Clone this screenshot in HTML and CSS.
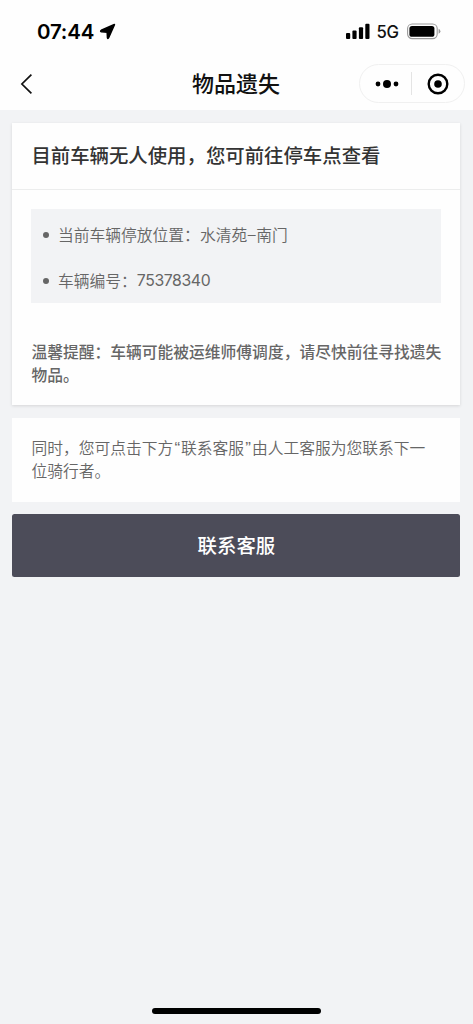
FILE: index.html
```html
<!DOCTYPE html>
<html lang="zh-CN">
<head>
<meta charset="utf-8">
<meta name="viewport" content="width=device-width, initial-scale=1">
<title>物品遗失</title>
<link rel="stylesheet" href="styles.css">
</head>
<body>
<div class="screen">
  <header class="top">
    <div class="status">
      <div class="status-left">
        <span class="clock">07:44</span>
        <svg class="locate" width="17" height="17" viewBox="0 0 17 17"><path d="M15.4 1.6 L9.6 14.7 Q8.9 16 8.5 14.7 L8.2 9.2 L2.4 8.7 Q1 8.2 2.3 7.3 Z" fill="#000" stroke="#000" stroke-width="1.6" stroke-linejoin="round"/></svg>
      </div>
      <div class="status-right">
        <svg class="signal" width="24" height="16" viewBox="0 0 24 16"><rect x="0" y="9.9" width="4.2" height="6" rx="1"/><rect x="6.4" y="7.4" width="4.2" height="8.5" rx="1"/><rect x="12.9" y="4.2" width="4.2" height="11.7" rx="1"/><rect x="19.3" y=".8" width="4.2" height="15.1" rx="1"/></svg>
        <span class="network">5G</span>
        <svg class="battery" width="34" height="17" viewBox="0 0 34 17"><rect x=".6" y="1" width="29.6" height="14.6" rx="4.6" fill="none" stroke="#999" stroke-width="1.1"/><rect x="2.4" y="2.9" width="25" height="10.9" rx="2.6"/><path d="M31.6 5.8 Q33.4 6.7 33.4 8.3 Q33.4 9.9 31.6 10.8 Z" fill="#999"/></svg>
      </div>
    </div>
    <nav class="nav">
      <svg class="back" width="13" height="22" viewBox="0 0 13 22"><path d="M11.4 1.6 L1.9 11 L11.4 20.4" fill="none" stroke="#111" stroke-width="1.7"/></svg>
      <h1 class="title">物品遗失</h1>
      <div class="capsule">
        <svg class="more" width="24" height="10" viewBox="0 0 24 10"><circle cx="3" cy="5" r="2.4"/><circle cx="12" cy="5" r="4"/><circle cx="21" cy="5" r="2.4"/></svg>
        <span class="split"></span>
        <svg class="close" width="22" height="22" viewBox="0 0 22 22"><circle cx="11" cy="11" r="9.3" fill="none" stroke="#000" stroke-width="2.4"/><circle cx="11" cy="11" r="3.8"/></svg>
      </div>
    </nav>
  </header>
  <main class="content">
    <section class="card raised">
      <h2 class="card-title">目前车辆无人使用，您可前往停车点查看</h2>
      <div class="card-body">
        <ul class="details">
          <li>当前车辆停放位置：水清苑<span class="dash">–</span>南门</li>
          <li>车辆编号：<span class="number">75378340</span></li>
        </ul>
        <p class="tip">温馨提醒：车辆可能被运维师傅调度，请尽快前往寻找遗失<br>物品。</p>
      </div>
    </section>
    <section class="card note">同时，您可点击下方<span class="quote">“</span>联系客服<span class="quote">”</span>由人工客服为您联系下一<br>位骑行者。</section>
    <button class="contact" type="button">联系客服</button>
  </main>
  <div class="home-bar"></div>
</div>
</body>
</html>
```

FILE: styles.css
```css
* { box-sizing: border-box; }

body {
  margin: 0;
  background: #f2f3f5;
  color: #666;
  font-family: "Noto Sans CJK SC", sans-serif;
}

.screen {
  display: flex;
  flex-direction: column;
  width: 473px;
  height: 1024px;
  overflow: hidden;
}

svg { display: block; flex: none; }

.top { height: 110px; background: #fefefe; }

.status {
  display: flex;
  justify-content: space-between;
  height: 57px;
  padding: 23px 32px 0 37px;
}

.status-left,
.status-right { display: flex; align-items: flex-start; }

.clock {
  width: 62px;
  color: #000;
  font: 600 20.5px/18px Inter, sans-serif;
  letter-spacing: -0.2px;
  white-space: nowrap;
}

.network {
  width: 23px;
  margin: 0 7.5px 0 7px;
  color: #111;
  font: 450 16.7px/19px Inter, sans-serif;
  letter-spacing: -0.2px;
}

.nav {
  display: grid;
  grid-template-columns: 106px 1fr 106px;
  align-items: center;
  height: 53px;
  padding: 0 8px 0 8px;
}

.back { margin-left: 12px; }

.title {
  margin: 0;
  padding: 0 1px 4px 0;
  color: #111;
  font-size: 22px;
  font-weight: 500;
  line-height: 32px;
  text-align: center;
}

.capsule {
  display: flex;
  align-items: center;
  width: 106px;
  height: 39px;
  padding-left: 15px;
  border: 1px solid #f0f0f0;
  border-radius: 20px;
}

.split { width: 1px; height: 23px; margin: 0 15px 0 12px; background: #e4e4e4; }

.content {
  display: flex;
  flex: 1;
  flex-direction: column;
  padding: 13px 12.6px 0 12.4px;
}

.card { background: #fefefe; }

.raised { height: 282px; box-shadow: 0 1px 3px rgba(0, 0, 0, .12); }

.card-title {
  height: 66.5px;
  margin: 0;
  padding: 17px 19px 0;
  border-bottom: 1.5px solid #eceded;
  color: #333;
  font-size: 19.4px;
  font-weight: 500;
  line-height: 29px;
  white-space: nowrap;
}

.card-body { padding: 19.5px 19px 0; }

.details {
  display: grid;
  grid-template-rows: 46px 46px;
  height: 94px;
  margin: 0;
  padding: 3px 0 0 12px;
  background: #f2f3f5;
  font-size: 15.77px;
  font-weight: 350;
  line-height: 46px;
  list-style: none;
}

.details li { display: flex; align-items: center; white-space: nowrap; }

.details li::before {
  width: 6px;
  height: 6px;
  margin-right: 8.6px;
  border-radius: 50%;
  background: #666;
  content: "";
}

.dash { width: 9px; font-family: Inter, sans-serif; text-align: center; }

.number {
  font-family: Inter, sans-serif;
  font-weight: 400;
  letter-spacing: -0.38px;
}

.tip {
  margin: 37px 0 0;
  font-size: 15.77px;
  font-weight: 500;
  line-height: 23px;
  white-space: nowrap;
}

.note {
  height: 84px;
  margin-top: 13px;
  padding: 18px 19px 0;
  font-size: 15.77px;
  font-weight: 350;
  line-height: 23px;
  white-space: nowrap;
}

.quote {
  padding: 0 0.9px 0 1.2px;
  font-family: "Liberation Sans", sans-serif;
  font-size: 17px;
  line-height: 1;
}

.contact {
  height: 63px;
  margin: 12.3px 0 0;
  padding: 0 0 3px;
  border: 0;
  border-radius: 2.5px;
  background: #4c4c59;
  color: #fff;
  font: 500 19.4px/29px "Noto Sans CJK SC", sans-serif;
}

.home-bar {
  align-self: center;
  width: 169px;
  height: 6px;
  margin-bottom: 10px;
  border-radius: 3px;
  background: #000;
}
```
